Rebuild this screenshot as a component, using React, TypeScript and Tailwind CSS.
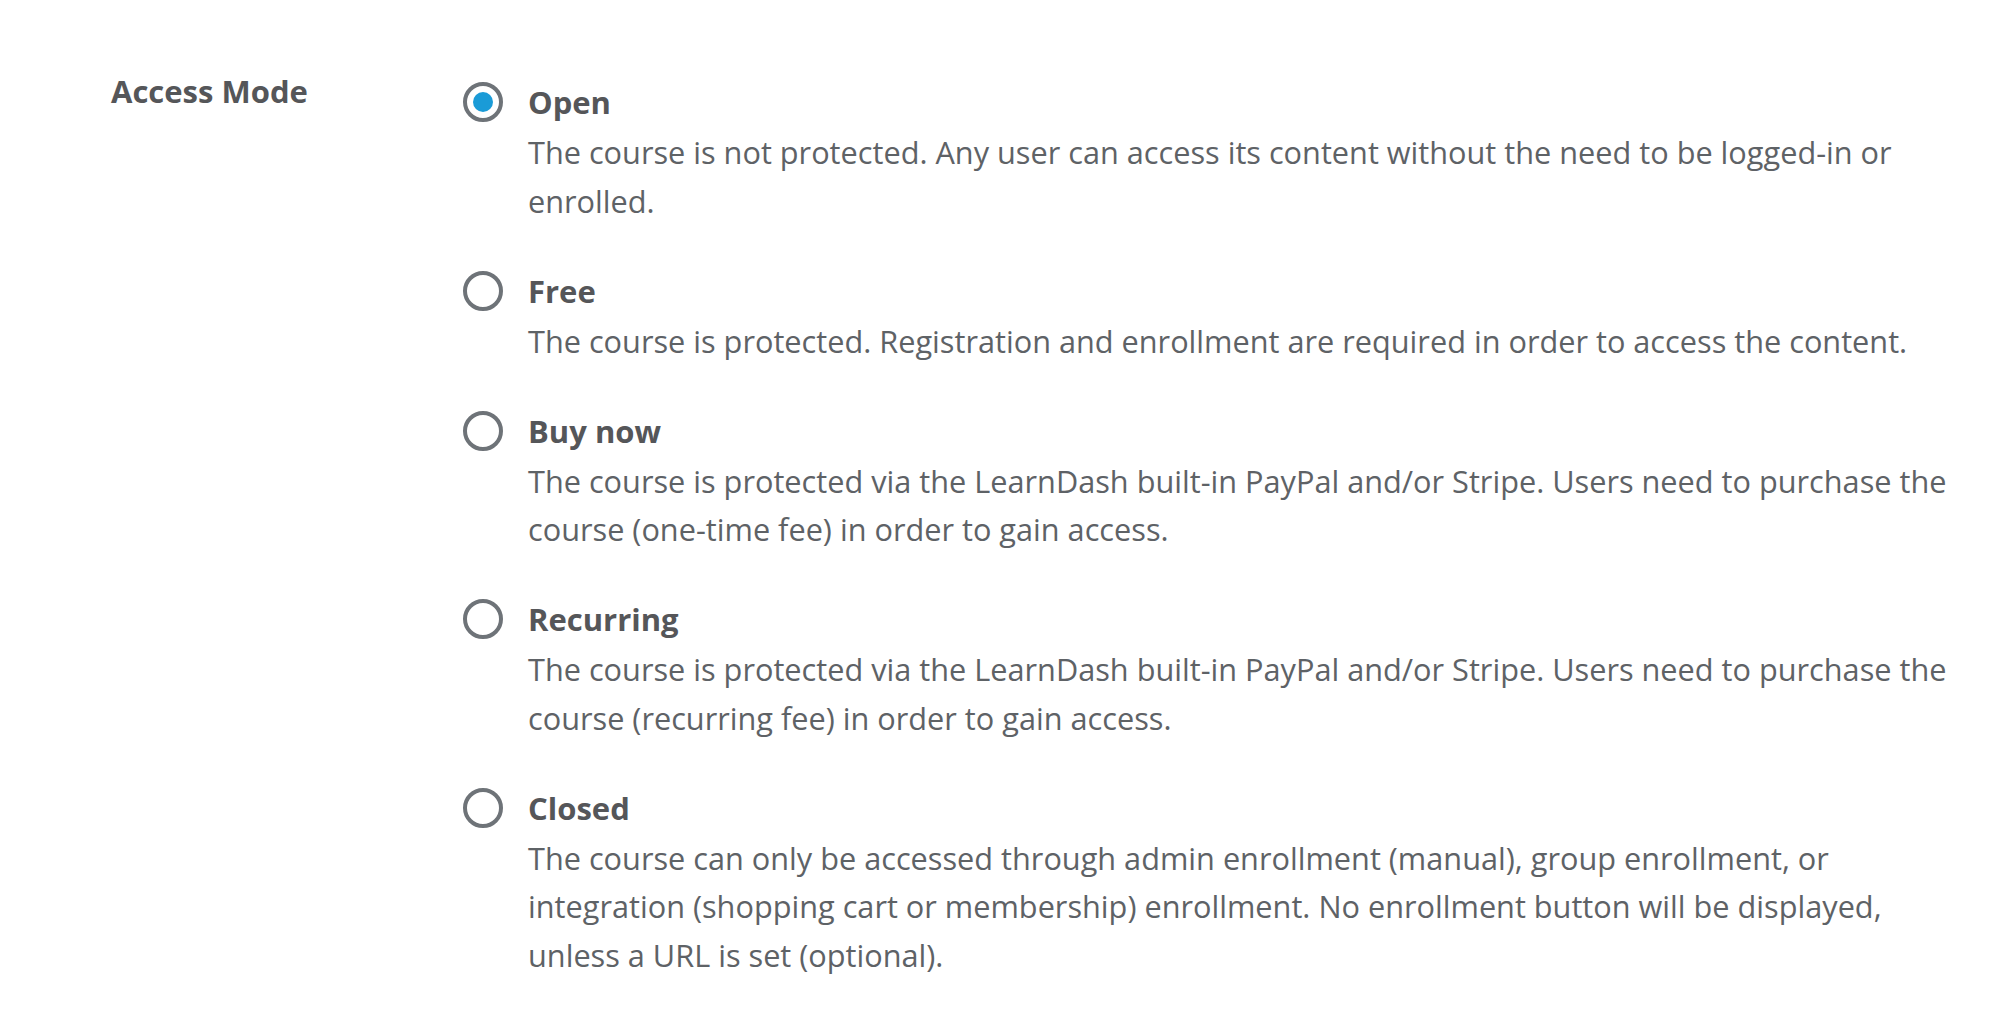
import React from "react";

type Opt = { label: string; desc: string; checked?: boolean };

const options: Opt[] = [
  {
    label: "Open",
    desc: "The course is not protected. Any user can access its content without the need to be logged-in or enrolled.",
    checked: true,
  },
  {
    label: "Free",
    desc: "The course is protected. Registration and enrollment are required in order to access the content.",
  },
  {
    label: "Buy now",
    desc: "The course is protected via the LearnDash built-in PayPal and/or Stripe. Users need to purchase the course (one-time fee) in order to gain access.",
  },
  {
    label: "Recurring",
    desc: "The course is protected via the LearnDash built-in PayPal and/or Stripe. Users need to purchase the course (recurring fee) in order to gain access.",
  },
  {
    label: "Closed",
    desc: "The course can only be accessed through admin enrollment (manual), group enrollment, or integration (shopping cart or membership) enrollment. No enrollment button will be displayed, unless a URL is set (optional).",
  },
];

function Radio({ checked }: { checked?: boolean }) {
  return (
    <div className="mt-[4px] flex h-[40px] w-[40px] shrink-0 items-center justify-center rounded-full border-[4px] border-[#6e7378] bg-white">
      {checked && <div className="h-[20px] w-[20px] rounded-full bg-[#1a9bd7]" />}
    </div>
  );
}

export default function App() {
  return (
    <div
      className="min-h-[1030px] w-full bg-white pl-[111px] pr-[30px] pt-[71px]"
      style={{ fontFamily: '"Open Sans", "Noto Sans", sans-serif' }}
    >
      <div className="flex items-start">
        <div className="w-[352px] shrink-0 text-[31px] font-bold leading-[40px] text-[#555659]">
          Access Mode
        </div>
        <div className="flex flex-1 flex-col gap-[41.5px] pt-[7px]">
          {options.map((o) => (
            <label key={o.label} className="flex items-start gap-[25px]">
              <Radio checked={o.checked} />
              <div className="flex-1">
                <div className="text-[31px] font-bold leading-[48px] text-[#555659]">{o.label}</div>
                <div className="mt-[2px] text-[30.7px] leading-[48.5px] text-[#5e6266]">{o.desc}</div>
              </div>
            </label>
          ))}
        </div>
      </div>
    </div>
  );
}
